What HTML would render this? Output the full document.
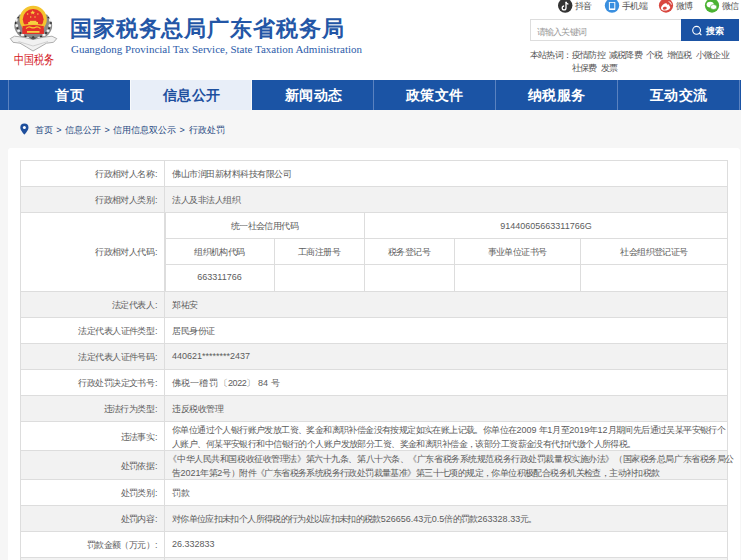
<!DOCTYPE html>
<html><head><meta charset="utf-8">
<style>
*{margin:0;padding:0;box-sizing:border-box}
html,body{width:741px;height:560px;overflow:hidden}
body{position:relative;background:#f6f6f6;font-family:"Liberation Sans",sans-serif;color:#444}
.abs{position:absolute;white-space:nowrap}
#hdr{position:absolute;left:0;top:0;width:741px;height:80px;background:#fff}
#title{left:70px;top:14px;font-size:22px;font-weight:bold;color:#2356a6;line-height:30px;letter-spacing:0.87px}
#eng{left:71px;top:43px;font-family:"Liberation Serif",serif;font-size:11px;color:#2d5caa;line-height:13px}
.il{font-size:9px;letter-spacing:-0.7px;color:#555;top:0px;line-height:12px}
#sbox{left:530px;top:19px;width:209px;height:22px;border:1px solid #ddd;background:#fff}
#ph{left:537px;top:24.5px;font-size:9px;letter-spacing:-0.85px;color:#999;line-height:14px}
#sbtn{left:681px;top:19px;width:58px;height:22px;background:#1b53a4}
#stxt{left:706px;top:24px;font-size:9.4px;font-weight:bold;color:#fff;line-height:14px}
.hot{font-size:9px;letter-spacing:-0.8px;color:#555;line-height:12px}
#nav{position:absolute;left:0;top:80px;width:741px;height:30px;background:#1b54a5}
.tab{position:absolute;top:0;height:30px;width:122px;text-align:center;color:#fff;font-weight:bold;font-size:14px;letter-spacing:0.5px;text-indent:1px;line-height:31px}
.tab.on{background:#e8eef8;color:#1d4f9e}
.sep{position:absolute;top:0;width:1px;height:30px;background:#5a82c0}
.sep.w{background:#f7f9fc}
.crumb{top:124px;font-size:9px;color:#234680;line-height:12px}
#panel{position:absolute;left:8px;top:148px;width:732px;height:430px;background:#fff;border-radius:3px}

.hl{position:absolute;height:1px;background:#ddd}
.vl{position:absolute;width:1px;background:#ddd}
.rb{position:absolute;left:20px;width:708px;background:#f2f2f2}
.lb{position:absolute;right:583.5px;font-size:9px;line-height:14px;color:#5c5c5c;white-space:nowrap;letter-spacing:-0.58px}
.lb i{font-style:normal;letter-spacing:0;margin-left:0.8px}
.vt{position:absolute;left:172px;font-size:9px;line-height:14px;color:#5c5c5c;white-space:nowrap;letter-spacing:-0.5px}
.ct{position:absolute;font-size:9px;line-height:14px;color:#5c5c5c;white-space:nowrap;letter-spacing:-0.6px;text-align:center}
.nm{letter-spacing:0}
</style></head><body>
<div id="hdr"></div>
<div class="abs" id="title">国家税务总局广东省税务局</div>
<div class="abs" id="eng">Guangdong Provincial Tax Service, State Taxation Administration</div>

<div class="abs" id="sbox"></div>
<div class="abs" id="ph">请输入关键词</div>
<div class="abs" id="sbtn"></div>
<div class="abs" id="stxt">搜索</div>
<svg class="abs" style="left:0;top:0" width="741" height="80" viewBox="0 0 741 80">
<!-- tiktok -->
<circle cx="565.2" cy="5.6" r="7.2" fill="#333"/>
<path d="M566 1.8v6.1a1.9 1.9 0 1 1-1.9-1.9" fill="none" stroke="#fff" stroke-width="1.3"/>
<path d="M566 2c0.3 1.3 1.2 2.1 2.4 2.2" fill="none" stroke="#fff" stroke-width="1.2"/>
<!-- phone -->
<circle cx="612" cy="5.6" r="7.2" fill="#3a8fdf"/>
<rect x="608.9" y="1.9" width="6.4" height="8" rx="0.6" fill="#fff"/>
<rect x="609.9" y="2.8" width="4.4" height="5.6" fill="#3a8fdf"/>
<!-- weibo -->
<circle cx="666" cy="5.6" r="7.1" fill="#d9473f"/>
<path d="M661 8.2c0-1.9 2.4-4.4 4.6-5 1.3-0.3 1.7 0.6 1.3 1.6 1.7-0.6 2.9-0.2 2.3 1.3 1 0.4 1.3 1.1 0.9 1.9-0.8 1.7-3.2 2.6-5.4 2.6-2.1 0-3.7-0.9-3.7-2.4z" fill="#fff"/>
<ellipse cx="664.8" cy="8.2" rx="2" ry="1.4" fill="#d9473f" transform="rotate(-15 664.8 8.2)"/>
<path d="M668.6 1.6a3.4 3.4 0 0 1 2.8 3" fill="none" stroke="#fff" stroke-width="0.9"/>
<!-- wechat -->
<circle cx="712" cy="5.6" r="7.1" fill="#4bb232"/>
<ellipse cx="710.2" cy="4.6" rx="3.6" ry="2.9" fill="#fff"/>
<ellipse cx="713.6" cy="7" rx="3.2" ry="2.5" fill="#fff" stroke="#4bb232" stroke-width="0.6"/>
<!-- emblem wreath -->
<path d="M19.5 14.5 Q13.5 21 14.5 28 Q16.5 35.5 24 38.8 L42.5 38.8 Q50 35.5 52 28 Q53 21 47 14.5 Z" fill="#8a8a8a"/>
<g fill="#fff" opacity="0.9"><ellipse cx="16.6" cy="20" rx="1.1" ry="1.7"/><ellipse cx="16.8" cy="25.5" rx="1.3" ry="1.5"/><ellipse cx="18.6" cy="30.8" rx="1.5" ry="1.3"/><ellipse cx="22.5" cy="35" rx="1.7" ry="1.2"/><ellipse cx="27.5" cy="37.6" rx="1.5" ry="0.9"/><ellipse cx="50" cy="20" rx="1.1" ry="1.7"/><ellipse cx="49.8" cy="25.5" rx="1.3" ry="1.5"/><ellipse cx="48" cy="30.8" rx="1.5" ry="1.3"/><ellipse cx="44" cy="35" rx="1.7" ry="1.2"/><ellipse cx="39" cy="37.6" rx="1.5" ry="0.9"/></g>
<g fill="#1e1e1e" opacity="0.85"><circle cx="15.6" cy="23" r="0.9"/><circle cx="17.5" cy="28.2" r="1"/><circle cx="20.5" cy="33" r="1"/><circle cx="51" cy="23" r="0.9"/><circle cx="49" cy="28.2" r="1"/><circle cx="46" cy="33" r="1"/><circle cx="25.5" cy="36.5" r="1"/><circle cx="41" cy="36.5" r="1"/><circle cx="18.3" cy="17.5" r="0.8"/><circle cx="48.3" cy="17.5" r="0.8"/><circle cx="33.2" cy="37.5" r="1.2"/></g>
<!-- banner -->
<path d="M10.3 38.6 L14.5 36.2 L23 37.2 L33 39.5 L43.5 37.2 L52 36.2 L56.8 38.6 L53.5 42.3 L46.5 43.2 L40 47 L33 51 L26.5 47 L20 43.2 L13 42.3 Z" fill="#f1f1f1" stroke="#a5a5a5" stroke-width="0.9"/>
<path d="M18.5 41.5 L33 46 L48 41.5" fill="none" stroke="#c8c8c8" stroke-width="0.8"/>
<path d="M29.5 37.5 Q33 41.5 37 37.5" fill="#555"/>
<!-- gold ring & red -->
<path d="M22.5 25 L22.5 33.9 L43.8 33.9 L43.8 25 Z" fill="#e2332b"/>
<circle cx="33.2" cy="19.3" r="13.6" fill="#f4c42e"/>
<circle cx="33.2" cy="19.3" r="10.4" fill="#e3302a"/>
<path d="M22.6 26 Q33 21.5 43.7 26 L43.7 33.9 L22.6 33.9 Z" fill="#e3302a"/>
<path d="M23 25.4 Q33 23.2 43.3 25.4" fill="none" stroke="#f4c42e" stroke-width="1.3"/>
<path d="M26 28.4 Q29 26.2 31 27.4 Q33 28.4 35.2 27.4 Q37.5 26.2 40.5 28.4" fill="none" stroke="#f4c42e" stroke-width="1.2"/>
<rect x="27" y="31" width="12.5" height="1.8" fill="#f6d040"/>
<rect x="28.2" y="22" width="9.8" height="2.3" fill="#f6d040"/>
<rect x="29.8" y="20.8" width="6.6" height="1.4" fill="#f6d040"/>
<polygon points="32.7,10.2 33.4,11.8 35.1,11.9 33.8,12.9 34.3,14.5 32.7,13.6 31.1,14.5 31.6,12.9 30.3,11.9 32,11.8" fill="#f6d040"/>
<circle cx="27.6" cy="14" r="0.75" fill="#f6d040"/><circle cx="37.9" cy="14" r="0.75" fill="#f6d040"/>
<circle cx="30.7" cy="17" r="0.75" fill="#f6d040"/><circle cx="35" cy="17" r="0.75" fill="#f6d040"/>
<!-- search button -->
<circle cx="696.6" cy="30.3" r="3.9" fill="none" stroke="#fff" stroke-width="1.1"/>
<path d="M699.3 33 L701.4 35.1" stroke="#fff" stroke-width="1.2"/>
</svg>
<div class="abs" style="left:13.5px;top:51px;font-family:'Liberation Serif',serif;font-size:10px;letter-spacing:0.3px;color:#d3161c;line-height:13px;transform:scaleY(1.3);transform-origin:0 0">中国税务</div>
<div class="abs il" style="left:575px">抖音</div>
<div class="abs il" style="left:622px">手机端</div>
<div class="abs il" style="left:676px">微博</div>
<div class="abs il" style="left:722px">微信</div>
<div class="abs hot" style="left:530px;top:49px">本站热词：</div>
<div class="abs hot" style="left:572px;top:49px">疫情防控</div>
<div class="abs hot" style="left:609px;top:49px">减税降费</div>
<div class="abs hot" style="left:646px;top:49px">个税</div>
<div class="abs hot" style="left:667px;top:49px">增值税</div>
<div class="abs hot" style="left:696px;top:49px">小微企业</div>
<div class="abs hot" style="left:572px;top:62px">社保费</div>
<div class="abs hot" style="left:601px;top:62px">发票</div>

<div id="nav">
<div class="tab" style="left:8px">首页</div>
<div class="tab on" style="left:130px">信息公开</div>
<div class="tab" style="left:252px">新闻动态</div>
<div class="tab" style="left:373px">政策文件</div>
<div class="tab" style="left:495px">纳税服务</div>
<div class="tab" style="left:617px">互动交流</div>
<div class="sep" style="left:8px"></div><div class="sep" style="left:373px"></div><div class="sep" style="left:495px"></div><div class="sep" style="left:617px"></div><div class="sep" style="left:739px"></div>
<div class="sep w" style="left:130px"></div><div class="sep w" style="left:251px"></div>
</div>

<svg class="abs" style="left:19px;top:123px" width="11" height="12" viewBox="0 0 11 12"><path d="M5.4 0.6a4.1 4.1 0 0 0-4.1 4.1c0 2.6 4.1 6.9 4.1 6.9s4.1-4.3 4.1-6.9a4.1 4.1 0 0 0-4.1-4.1z" fill="#1f4f9c"/><circle cx="5.4" cy="4.6" r="1.5" fill="#fff"/></svg>
<div class="abs crumb" style="left:35px">首页</div><div class="abs crumb" style="left:56.3px">&gt;</div>
<div class="abs crumb" style="left:64.8px">信息公开</div><div class="abs crumb" style="left:104.4px">&gt;</div>
<div class="abs crumb" style="left:113.3px">信用信息双公示</div><div class="abs crumb" style="left:179.4px">&gt;</div>
<div class="abs crumb" style="left:188.6px">行政处罚</div>

<div id="panel"></div>
<div class="rb" style="top:186px;height:26px"></div>
<div class="rb" style="top:291px;height:26px"></div>
<div class="rb" style="top:343px;height:26px"></div>
<div class="rb" style="top:395px;height:26px"></div>
<div class="rb" style="top:450px;height:29px"></div>
<div class="rb" style="top:505px;height:26px"></div>
<div class="rb" style="top:557px;height:43px"></div>
<div class="hl" style="left:20px;width:708px;top:160px"></div>
<div class="hl" style="left:20px;width:708px;top:186px"></div>
<div class="hl" style="left:20px;width:708px;top:212px"></div>
<div class="hl" style="left:165px;width:563px;top:238px"></div>
<div class="hl" style="left:165px;width:563px;top:264px"></div>
<div class="hl" style="left:20px;width:708px;top:291px"></div>
<div class="hl" style="left:20px;width:708px;top:317px"></div>
<div class="hl" style="left:20px;width:708px;top:343px"></div>
<div class="hl" style="left:20px;width:708px;top:369px"></div>
<div class="hl" style="left:20px;width:708px;top:395px"></div>
<div class="hl" style="left:20px;width:708px;top:421px"></div>
<div class="hl" style="left:20px;width:708px;top:450px"></div>
<div class="hl" style="left:20px;width:708px;top:479px"></div>
<div class="hl" style="left:20px;width:708px;top:505px"></div>
<div class="hl" style="left:20px;width:708px;top:531px"></div>
<div class="hl" style="left:20px;width:708px;top:557px"></div>
<div class="vl" style="left:20px;top:160px;height:400px"></div>
<div class="vl" style="left:164px;top:160px;height:400px"></div>
<div class="vl" style="left:727px;top:160px;height:400px"></div>
<div class="vl" style="left:165px;top:212px;height:79px"></div>
<div class="vl" style="left:364px;top:212px;height:79px"></div>
<div class="vl" style="left:274px;top:238px;height:53px"></div>
<div class="vl" style="left:454px;top:238px;height:53px"></div>
<div class="vl" style="left:580px;top:238px;height:53px"></div>
<div class="lb" style="top:167px">行政相对人名称<i>:</i></div>
<div class="lb" style="top:193px">行政相对人类别<i>:</i></div>
<div class="lb" style="top:244.5px">行政相对人代码<i>:</i></div>
<div class="lb" style="top:298px">法定代表人<i>:</i></div>
<div class="lb" style="top:324px">法定代表人证件类型<i>:</i></div>
<div class="lb" style="top:350px">法定代表人证件号码<i>:</i></div>
<div class="lb" style="top:376px">行政处罚决定文书号<i>:</i></div>
<div class="lb" style="top:402px">违法行为类型<i>:</i></div>
<div class="lb" style="top:430px">违法事实<i>:</i></div>
<div class="lb" style="top:459px">处罚依据<i>:</i></div>
<div class="lb" style="top:486px">处罚类别<i>:</i></div>
<div class="lb" style="top:512px">处罚内容<i>:</i></div>
<div class="lb" style="top:538px">罚款金额（万元）<i>:</i></div>
<div class="vt" style="top:167px">佛山市润田新材料科技有限公司</div>
<div class="vt" style="top:193px">法人及非法人组织</div>
<div class="vt" style="top:298px">郑祐安</div>
<div class="vt" style="top:324px">居民身份证</div>
<div class="vt" style="top:349px"><span class=nm>440621********2437</span></div>
<div class="vt" style="top:376px;letter-spacing:-0.1px">佛税一稽<span style="margin-left:-1.5px"> </span>罚<span style="margin-left:1.6px">〔</span><span class=nm style="letter-spacing:-0.4px">2022</span><span style="margin-left:-0.5px">〕</span><span class=nm style="margin-left:3.3px">84</span><span style="margin-left:0.6px"> </span>号</div>
<div class="vt" style="top:402px">违反税收管理</div>
<div class="vt" style="top:423px;letter-spacing:-0.6px">你单位通过个人银行账户发放工资、奖金和离职补偿金没有按规定如实在账上记载。你单位在<span class=nm>2009 </span>年<span class=nm>1</span>月至<span class=nm>2019</span>年<span class=nm>12</span>月期间先后通过吴某平安银行个</div>
<div class="vt" style="top:437px;letter-spacing:-0.57px">人账户、何某平安银行和中信银行的个人账户发放部分工资、奖金和离职补偿金，该部分工资薪金没有代扣代缴个人所得税。</div>
<div class="vt" style="top:452px;letter-spacing:-0.43px;left:168.4px">《中华人民共和国税收征收管理法》第六十九条、第八十六条、《广东省税务系统规范税务行政处罚裁量权实施办法》（国家税务总局广东省税务局公</div>
<div class="vt" style="top:466px;letter-spacing:-0.59px">告<span class=nm>2021</span>年第<span class=nm>2</span>号）附件《广东省税务系统税务行政处罚裁量基准》第三十七项的规定，你单位积极配合税务机关检查，主动补扣税款</div>
<div class="vt" style="top:486px">罚款</div>
<div class="vt" style="top:512px;letter-spacing:-0.65px">对你单位应扣未扣个人所得税的行为处以应扣未扣的税款<span class=nm>526656.43</span>元<span class=nm>0.5</span>倍的罚款<span class=nm>263328.33</span>元。</div>
<div class="vt" style="top:537px"><span class=nm>26.332833</span></div>
<div class="ct" style="top:219px;left:165px;width:199px">统一社会信用代码</div>
<div class="ct" style="top:219px;left:364px;width:364px"><span class=nm>91440605663311766G</span></div>
<div class="ct" style="top:245px;left:165px;width:109px">组织机构代码</div>
<div class="ct" style="top:245px;left:274px;width:90px">工商注册号</div>
<div class="ct" style="top:245px;left:364px;width:90px">税务登记号</div>
<div class="ct" style="top:245px;left:454px;width:126px">事业单位证书号</div>
<div class="ct" style="top:245px;left:580px;width:148px">社会组织登记证号</div>
<div class="ct" style="top:270px;left:165px;width:109px"><span class=nm>663311766</span></div>
</body></html>
